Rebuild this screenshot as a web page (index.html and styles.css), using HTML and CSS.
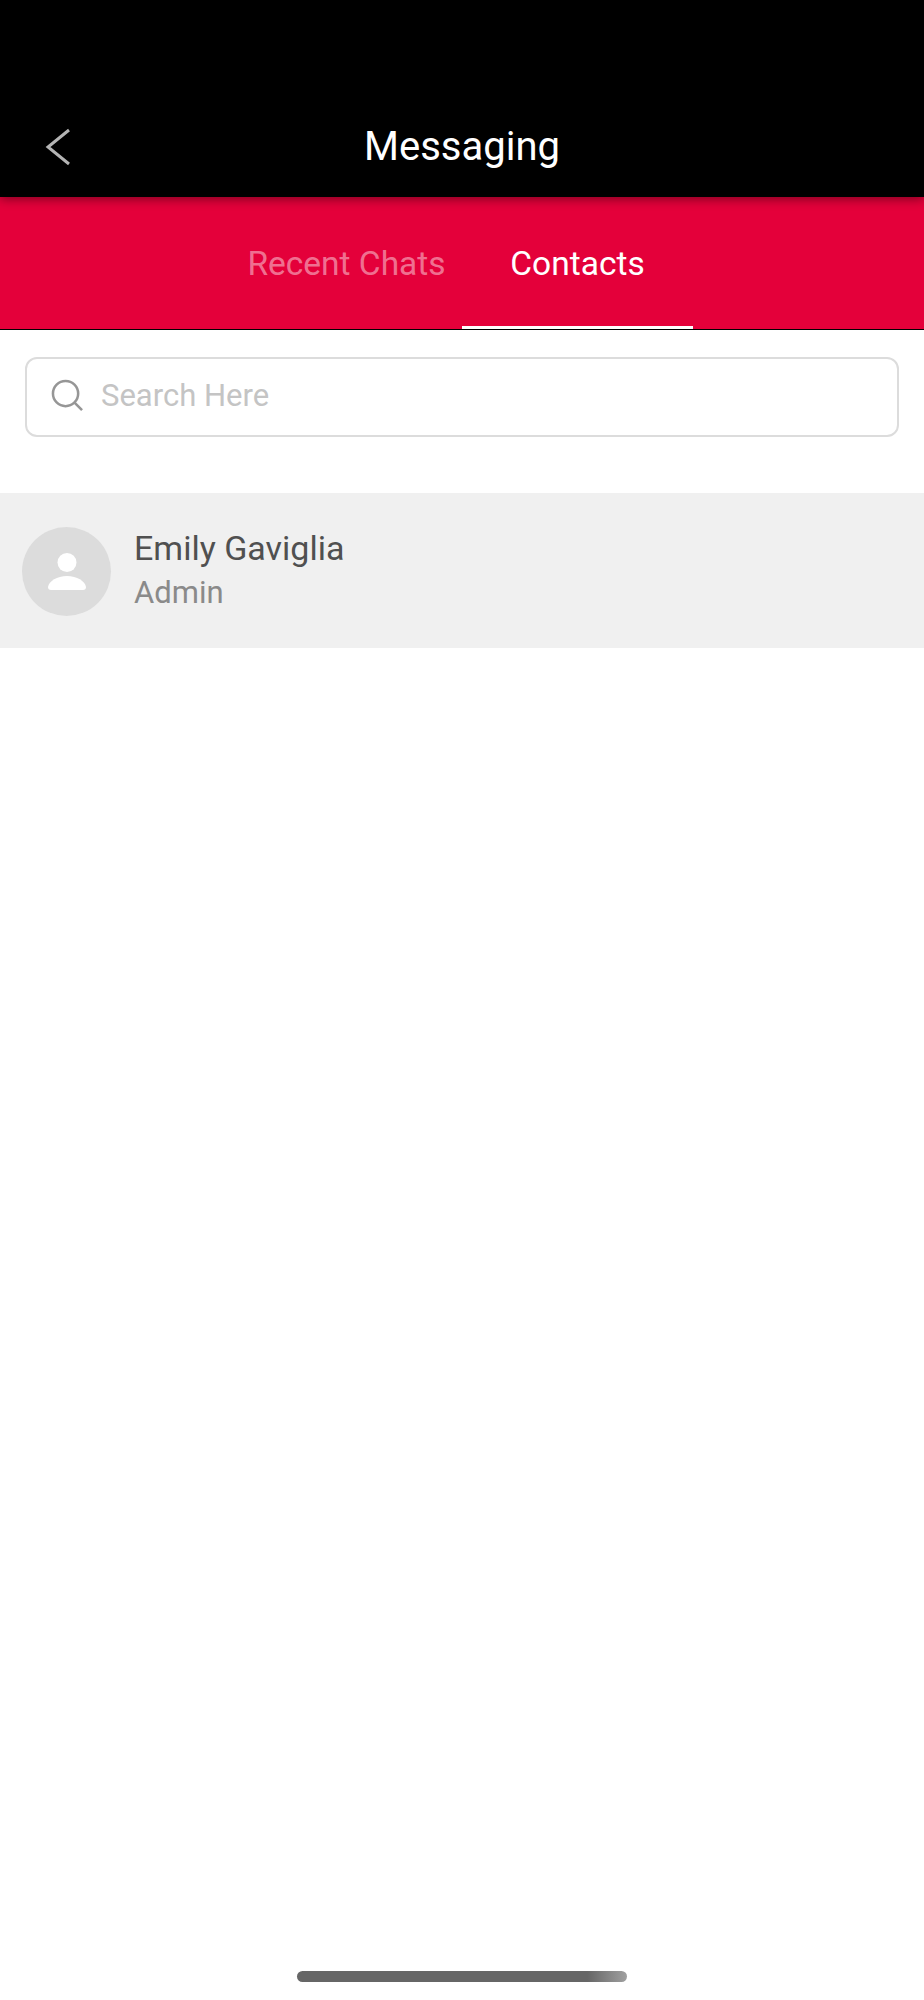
FILE: index.html
```html
<!DOCTYPE html>
<html lang="en">
<head>
  <meta charset="UTF-8" />
  <meta name="viewport" content="width=device-width, initial-scale=1" />
  <title>Messaging</title>
  <link rel="stylesheet" href="styles.css">
</head>
<body>
  <header class="topbar">
    <button class="back-btn" aria-label="Back">
      <svg width="28" height="38" viewBox="0 0 28 38" fill="none">
        <path d="M24 2 L3 19 L24 36" stroke="#b4b4b4" stroke-width="3" />
      </svg>
    </button>
    <h1>Messaging</h1>
  </header>

  <nav class="tabs">
    <a class="tab">Recent Chats</a>
    <a class="tab active">Contacts</a>
  </nav>

  <main>
    <div class="search-wrap">
      <label class="search">
        <svg width="33" height="33" viewBox="0 0 34 34" fill="none">
          <circle cx="15" cy="15" r="13" stroke="#969696" stroke-width="2.6" />
          <path d="M24.5 24.5 L32 32" stroke="#969696" stroke-width="2.6" />
        </svg>
        <input type="text" placeholder="Search Here" />
      </label>
    </div>

    <div class="contact">
      <div class="avatar">
        <svg width="38" height="37" viewBox="0 0 38 37" fill="#fff">
          <circle cx="19" cy="9.5" r="9.5" />
          <path d="M0 34 C1 28 9 23 19 23 C29 23 37 28 38 34 C38 36 37 37 35 37 L3 37 C1 37 0 36 0 34 Z" />
        </svg>
      </div>
      <div class="contact-info">
        <div class="contact-name">Emily Gaviglia</div>
        <div class="contact-role">Admin</div>
      </div>
    </div>
  </main>

  <div class="home-bar"></div>
</body>
</html>
```

FILE: styles.css
```css
* {
  box-sizing: border-box;
}
html, body {
  margin: 0;
  padding: 0;
  height: 2000px;
  background: #fff;
  font-family: Roboto, "Liberation Sans", sans-serif;
  overflow: hidden;
}
body {
  display: flex;
  flex-direction: column;
}

/* Top bar */
.topbar {
  height: 197px;
  background: #000;
  display: flex;
  align-items: flex-end;
  justify-content: center;
  padding-bottom: 27px;
  position: relative;
  z-index: 1;
  box-shadow: 0 2px 10px rgba(0 0 0 / 0.45);
}
.topbar h1 {
  margin: 0;
  color: #fff;
  font-weight: 400;
  font-size: 40px;
  line-height: 46px;
}
.back-btn {
  position: absolute;
  left: 45px;
  top: 128px;
  padding: 0;
  border: none;
  background: none;
  display: flex;
}

/* Tabs */
.tabs {
  height: 133px;
  background: #e4003a;
  border-bottom: 1px solid #000;
  display: flex;
  justify-content: center;
  flex-shrink: 0;
}
.tab {
  width: 231px;
  display: flex;
  align-items: center;
  justify-content: center;
  padding-top: 3px;
  color: rgba(255 255 255 / 0.45);
  font-size: 33.5px;
  border-bottom: 3px solid transparent;
}
.tab.active {
  color: #fff;
  border-bottom-color: #fff;
}

/* Search */
.search-wrap {
  padding: 27px 25px 56px;
}
.search {
  height: 80px;
  border: 2px solid #dcdcdc;
  border-radius: 12px;
  display: flex;
  align-items: center;
  gap: 17px;
  padding-left: 24px;
  padding-bottom: 3px;
}
.search input {
  flex: 1;
  border: none;
  outline: none;
  background: none;
  padding: 0;
  font-family: inherit;
  font-size: 31px;
  color: #444;
}
.search input::placeholder {
  color: #c4c4c4;
  opacity: 1;
}

/* Contact row */
.contact {
  height: 155px;
  background: #f0f0f0;
  display: flex;
  align-items: center;
  gap: 23px;
  padding-left: 22px;
  padding-top: 1px;
}
.avatar {
  width: 89px;
  height: 89px;
  border-radius: 50%;
  background: #dcdcdc;
  display: flex;
  align-items: center;
  justify-content: center;
}
.contact-name {
  font-size: 34px;
  line-height: 44px;
  margin-top: -1px;
  margin-bottom: 1px;
  color: #505050;
}
.contact-role {
  font-size: 31px;
  line-height: 44px;
  color: #8a8a8a;
}

/* Home indicator */
.home-bar {
  position: absolute;
  left: 297px;
  top: 1971px;
  width: 330px;
  height: 11px;
  border-radius: 6px;
  background: linear-gradient(90deg, #666 0%, #666 88%, #a0a0a0 100%);
}
```
